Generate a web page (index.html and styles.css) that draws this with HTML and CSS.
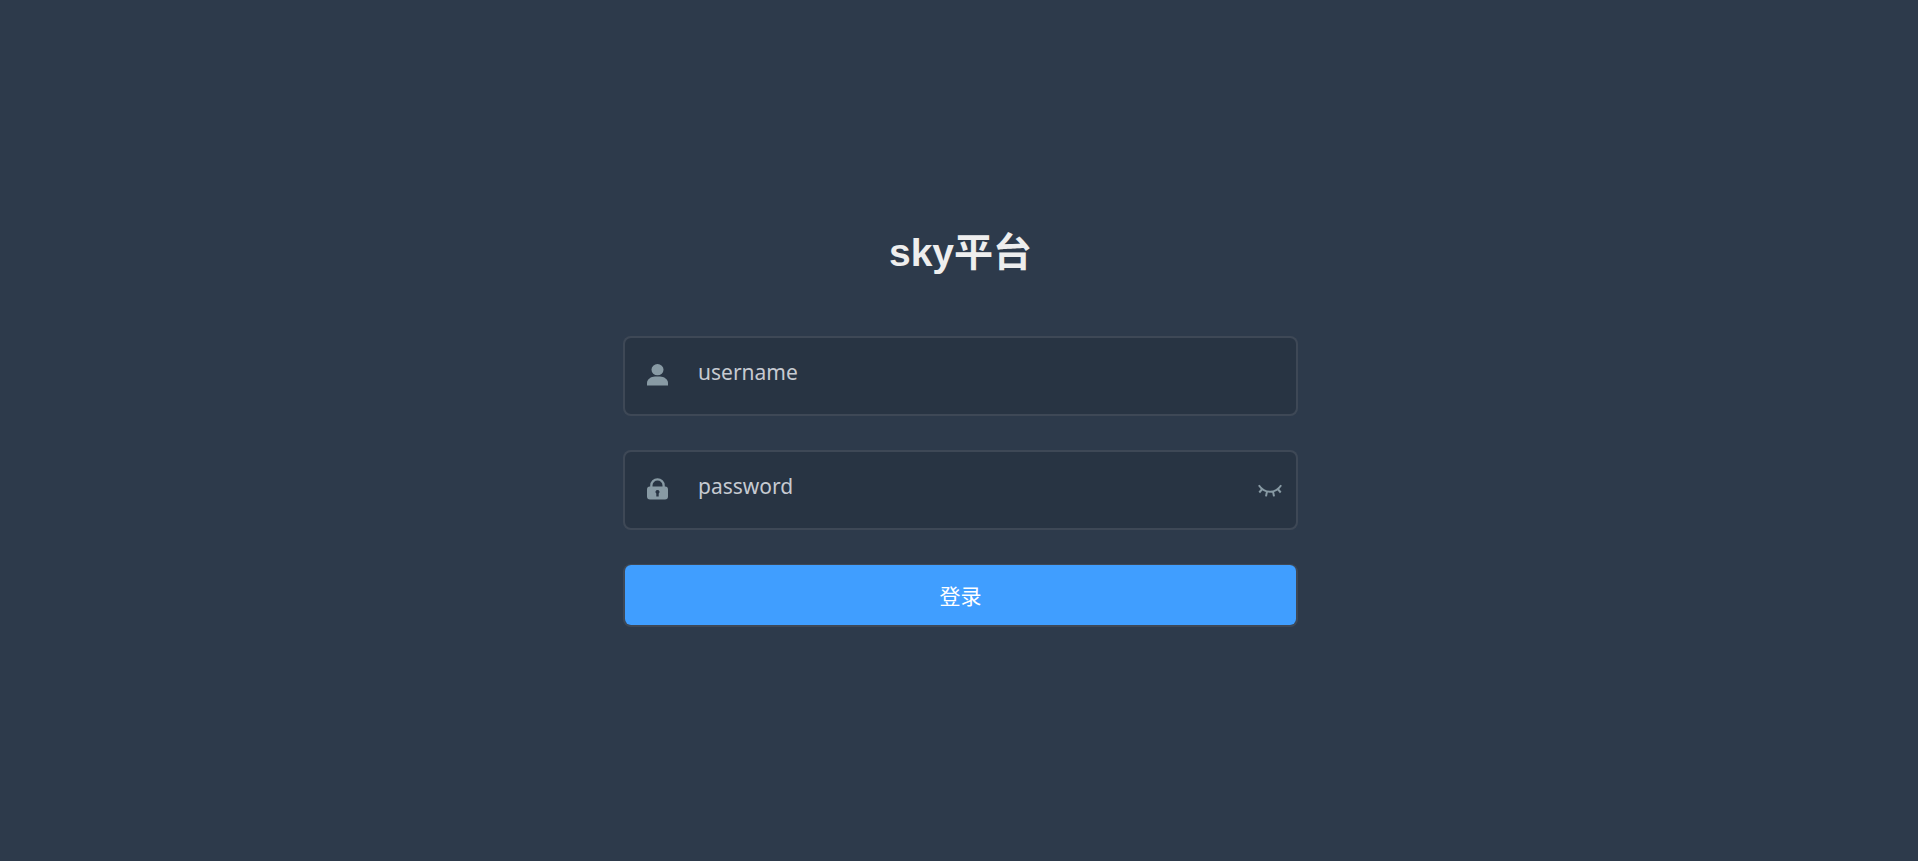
FILE: index.html
```html
<!DOCTYPE html>
<html lang="zh-CN">
<head>
<meta charset="utf-8">
<meta name="viewport" content="width=device-width, initial-scale=1">
<title>sky平台</title>
<link rel="stylesheet" href="styles.css">
</head>
<body>
<main class="login">
  <form class="login-form">
    <h1 class="title">sky平台</h1>
    <div class="field">
      <label class="field-icon" for="username" aria-label="username">
        <svg class="icon" viewBox="0 0 21 22" aria-hidden="true"><ellipse cx="10.500" cy="5.700" rx="6" ry="5.600"/><path d="M0 21.500v-2.500C0 15.500 4 12.600 8 12.600h5c4 0 8 2.900 8 6.400v2.500z"/></svg>
      </label>
      <input class="field-input" id="username" type="text" placeholder="username" autocomplete="off">
    </div>
    <div class="field">
      <label class="field-icon" for="password" aria-label="password">
        <svg class="icon" viewBox="0 0 21 22" aria-hidden="true"><path fill-rule="evenodd" d="M3.200 8.500V7.500a7.300 7.300 0 0 1 14.600 0v1A3 3 0 0 1 21 11.500v7a3 3 0 0 1-3 3H3a3 3 0 0 1-3-3v-7a3 3 0 0 1 3.200-3zM5.500 8.500h10V7.500a5 5 0 0 0-10 0zM10.500 12a2 2 0 0 0-1.200 3.600v2.900h2.400v-2.900a2 2 0 0 0-1.200-3.600z"/></svg>
      </label>
      <input class="field-input" id="password" type="password" placeholder="password" autocomplete="off">
      <button class="toggle" type="button" aria-label="显示密码">
        <svg class="eye" viewBox="0 0 24 14" aria-hidden="true"><path d="M.8 1.200C6.500 9.800 17.500 9.800 23.200 1.200M4.200 5L1.300 8.500M19.800 5l2.900 3.500M9 7.400l-1 5M15 7.400l1 5"/></svg>
      </button>
    </div>
    <div class="field field-submit">
      <button class="submit" type="submit">登录</button>
    </div>
  </form>
</main>
</body>
</html>
```
FILE: styles.css
```css
* {
  box-sizing: border-box;
}

body {
  margin: 0;
  background: #2d3a4b;
  font-family: "Noto Sans", "Noto Sans CJK SC", sans-serif;
}

.login {
  min-height: 100vh;
  padding: 230px 24px 0 27px;
}

.login-form {
  display: flex;
  flex-direction: column;
  gap: 34px;
  max-width: 675px;
  margin: 0 auto;
}

.title {
  margin: 0 0 26px;
  color: #eee;
  font: bold 39px/46px "Liberation Sans", "Noto Sans CJK SC", sans-serif;
  text-align: center;
}

.field {
  display: flex;
  align-items: center;
  border: 2px solid rgba(255, 255, 255, 0.1);
  border-radius: 8px;
  background: rgba(0, 0, 0, 0.1);
}

.field-submit {
  border-top-width: 1px;
}

.field-icon {
  display: flex;
  padding: 0 0 2px 22px;
}

.icon {
  width: 21px;
  height: 22px;
  fill: #889aa4;
}

.field-input {
  flex: 1;
  min-width: 0;
  height: 76px;
  margin: 0;
  padding: 0 24px 8px 30px;
  border: 0;
  outline: 0;
  background: transparent;
  color: #fff;
  font: 21px/30px "Noto Sans", "Noto Sans CJK SC", sans-serif;
}

.field-input::placeholder {
  color: #c6cad1;
  opacity: 1;
}

.toggle {
  display: flex;
  margin: 0;
  padding: 2px 14px 0 0;
  border: 0;
  background: transparent;
  cursor: pointer;
}

.eye {
  width: 24px;
  height: 14px;
  fill: none;
  stroke: #889aa4;
  stroke-width: 2;
}

.submit {
  flex: 1;
  height: 60px;
  margin: 0;
  padding: 0;
  border: 0;
  border-radius: 6px;
  background: #409eff;
  color: #fff;
  font: 21px/30px "Noto Sans CJK SC", sans-serif;
  cursor: pointer;
}
```
